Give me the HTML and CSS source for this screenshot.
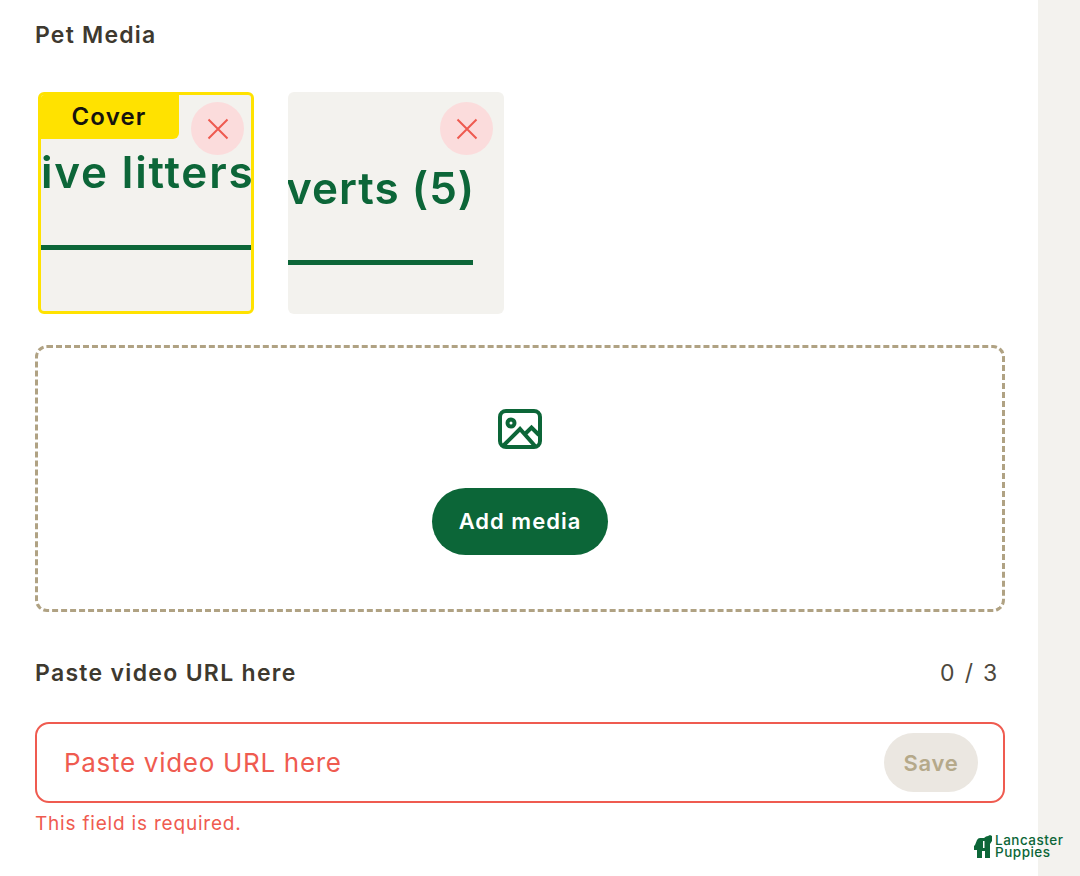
FILE: index.html
```html
<!DOCTYPE html>
<html lang="en">
<head>
  <meta charset="UTF-8" />
  <meta name="viewport" content="width=device-width, initial-scale=1.0"/>
  <title>Pet Media</title>
  <link rel="stylesheet" href="styles.css">
</head>
<body>
  <div class="page">
    <main class="panel">
      <h2 class="title">Pet Media</h2>

      <div class="thumbs">
        <div class="thumb thumb-cover">
          <span class="cover-tag">Cover</span>
          <button class="remove" type="button" aria-label="Remove">
            <svg width="24" height="24" viewBox="0 0 24 24"><path d="M2.500 2.500 L21.500 21.500 M21.500 2.500 L2.500 21.500"/></svg>
          </button>
          <div class="shot shot-one">
            <span class="shot-text">ive litters</span>
            <span class="shot-line"></span>
          </div>
        </div>
        <div class="thumb">
          <button class="remove" type="button" aria-label="Remove">
            <svg width="24" height="24" viewBox="0 0 24 24"><path d="M2.500 2.500 L21.500 21.500 M21.500 2.500 L2.500 21.500"/></svg>
          </button>
          <div class="shot shot-two">
            <span class="shot-text">verts (5)</span>
            <span class="shot-line"></span>
          </div>
        </div>
      </div>

      <div class="dropzone">
        <svg class="media-icon" width="44" height="40" viewBox="0 0 44 40" fill="none">
          <rect x="2" y="2" width="40" height="36" rx="6"/>
          <circle cx="13" cy="14" r="3.500"/>
          <path d="M5 37 L22 20 L37 37 M27 25 L33.500 18.500 L41 26"/>
        </svg>
        <button class="add-btn" type="button">Add media</button>
      </div>

      <div class="url-head">
        <span class="url-label">Paste video URL here</span>
        <span class="url-count">0 / 3</span>
      </div>

      <div class="url-field">
        <input class="url-input" type="text" placeholder="Paste video URL here" />
        <button class="save-btn" type="button" disabled>Save</button>
      </div>
      <div class="error">This field is required.</div>
    </main>
    <aside class="rail"></aside>
  </div>

  <div class="brand">
    <svg width="19" height="23" viewBox="0 0 19 23">
      <path d="M0 11 L1 10 L3 5 Q4 3 6 3 L10 3 Q12 1 14 1 L16 0 L18 1 L18 6 L16 9 L16 23 L11 23 L11 16 L8 16 L8 23 L3 23 L3 15 L0 15 Z"/>
      <path class="brand-slit" d="M9 6 L10.500 6 L10.500 13 L9 13 Z"/>
    </svg>
    <span class="brand-name">Lancaster<br>Puppies</span>
  </div>
</body>
</html>
```

FILE: styles.css
```css
* {
  box-sizing: border-box;
  font-family: Inter, 'Open Sans', sans-serif;
}

html, body {
  margin: 0;
  padding: 0;
  height: 100%;
  overflow: hidden;
  background: #ffffff;
}

.page {
  display: flex;
  height: 876px;
}

.panel {
  width: 1038px;
  padding: 21px 33px 0 35px;
  background: #ffffff;
}

.rail {
  width: 42px;
  background: #f3f2ee;
}

.title {
  margin: 0;
  font-size: 23px;
  line-height: 29px;
  font-weight: 600;
  letter-spacing: 1.2px;
  color: #3e392f;
}

.thumbs {
  display: flex;
  gap: 34px;
  margin: 42px 0 31px 3px;
}

.thumb {
  position: relative;
  width: 216px;
  height: 222px;
  background: #f3f2ee;
  border-radius: 6px;
  overflow: hidden;
}

.thumb-cover {
  border: 3px solid #ffe200;
}

.cover-tag {
  position: absolute;
  top: 0;
  left: 0;
  width: 138px;
  height: 44px;
  padding-right: 2px;
  background: #ffe200;
  border-bottom-right-radius: 6px;
  color: #15130e;
  font-size: 24px;
  font-weight: 600;
  letter-spacing: 1.2px;
  line-height: 44px;
  text-align: center;
  z-index: 1;
}

.remove {
  position: absolute;
  top: 10px;
  right: 11px;
  width: 53px;
  height: 53px;
  padding: 0;
  border: none;
  border-radius: 50%;
  background: #fbdcdc;
  display: flex;
  align-items: center;
  justify-content: center;
  z-index: 1;
}

.thumb-cover .remove {
  top: 7px;
  right: 7px;
}

.remove path {
  stroke: #ee5a50;
  stroke-width: 2;
  fill: none;
}

.shot {
  height: 100%;
  display: flex;
  flex-direction: column;
  overflow: hidden;
  filter: blur(0.7px);
}

.shot-text {
  font-size: 44px;
  font-weight: 600;
  line-height: 50px;
  color: #0c6638;
  white-space: nowrap;
}

.shot-line {
  display: block;
  height: 5px;
  background: #0c6638;
}

.shot-one .shot-text {
  margin-top: 52px;
  letter-spacing: 1.8px;
}

.shot-one .shot-line {
  margin-top: 48px;
}

.shot-two .shot-text {
  margin-top: 71px;
  margin-left: -2px;
  letter-spacing: 1px;
}

.shot-two .shot-line {
  margin-top: 47px;
  width: 185px;
}

.dropzone {
  height: 267px;
  border: 3px dashed #b0a283;
  border-radius: 12px;
  display: flex;
  flex-direction: column;
  align-items: center;
  padding-top: 61px;
}

.media-icon {
  display: block;
  margin-bottom: 39px;
}

.media-icon rect, .media-icon circle, .media-icon path {
  stroke: #0c6638;
  stroke-width: 4;
}

.add-btn {
  width: 176px;
  height: 67px;
  padding: 0 0 2px;
  border: none;
  border-radius: 34px;
  background: #0c6638;
  color: #ffffff;
  font-size: 22px;
  font-weight: 600;
  letter-spacing: 1px;
}

.url-head {
  display: flex;
  justify-content: space-between;
  align-items: center;
  margin-top: 44px;
  padding: 0 6px 0 0;
  height: 34px;
}

.url-label {
  font-size: 23px;
  font-weight: 600;
  letter-spacing: 1.3px;
  color: #3e392f;
}

.url-count {
  font-size: 23px;
  letter-spacing: 1.8px;
  color: #4d483d;
}

.url-field {
  display: flex;
  align-items: center;
  margin-top: 32px;
  height: 81px;
  padding: 0 25px 0 25px;
  border: 2px solid #ef5b50;
  border-radius: 14px;
}

.url-input {
  flex: 1;
  border: none;
  outline: none;
  font-size: 26px;
  letter-spacing: 0.7px;
  color: #ef5b50;
  background: transparent;
}

.url-input::placeholder {
  color: #ef5b50;
  opacity: 1;
}

.save-btn {
  width: 94px;
  height: 59px;
  padding: 0;
  border: none;
  border-radius: 30px;
  background: #ebe7e1;
  color: #b5a98a;
  font-size: 22px;
  font-weight: 600;
  letter-spacing: 0.7px;
}

.error {
  margin-top: 9px;
  font-size: 19px;
  line-height: 24px;
  letter-spacing: 0.8px;
  color: #ef5b50;
}

.brand {
  position: absolute;
  left: 974px;
  top: 834px;
  display: flex;
  align-items: center;
  gap: 2px;
}

.brand path {
  fill: #0c6638;
}

.brand .brand-slit {
  fill: #ffffff;
}

.brand-name {
  font-size: 13.500px;
  line-height: 12px;
  font-weight: 500;
  letter-spacing: 0.5px;
  color: #0c6638;
}
```
